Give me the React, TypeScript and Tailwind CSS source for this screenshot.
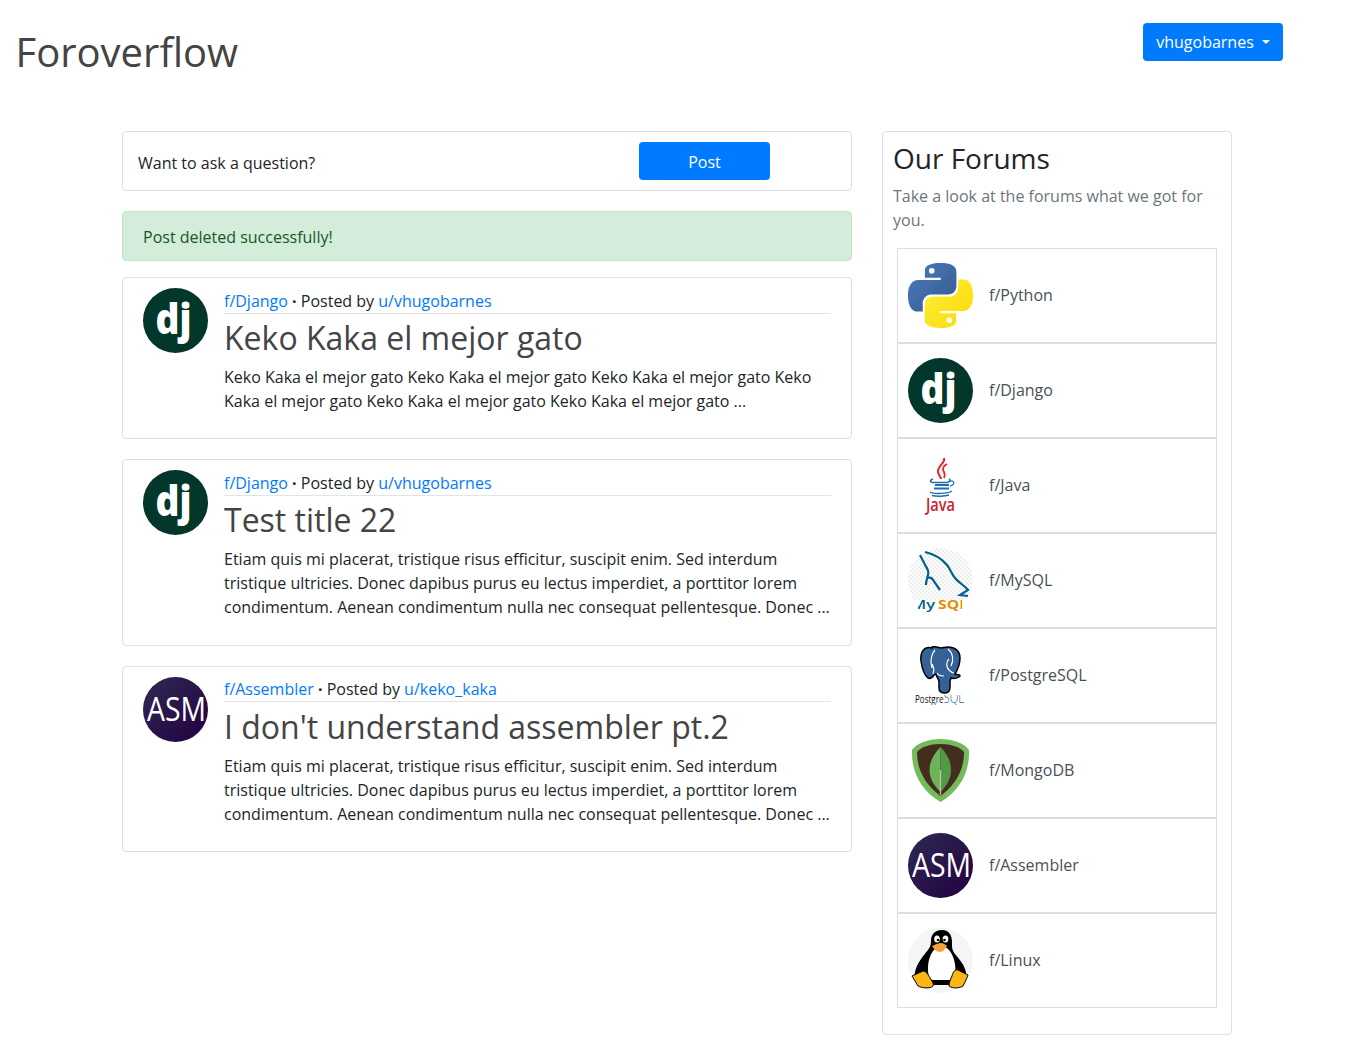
const PY_HALF =
  "M54.9 0C26.8 0 28.6 12.2 28.6 12.2l0 12.6h26.8v3.8H17.9S0 26.6 0 54.9c0 28.3 15.7 27.3 15.7 27.3h9.3V69s-.5-15.7 15.4-15.7h26.6s14.9.2 14.9-14.4V14.7S84.2 0 54.9 0zM40.2 8.5a4.8 4.8 0 1 1 0 9.6 4.8 4.8 0 0 1 0-9.6z";

function PythonLogo() {
  return (
    <svg viewBox="0 0 110 110" className="w-[65px] h-[65px] shrink-0">
      <defs>
        <linearGradient id="pyBlue" x1="0" y1="0" x2="1" y2="1">
          <stop offset="0" stopColor="#4a7cbd" />
          <stop offset="1" stopColor="#36598f" />
        </linearGradient>
        <linearGradient id="pyYellow" x1="0" y1="0" x2="1" y2="1">
          <stop offset="0" stopColor="#fdd900" />
          <stop offset="1" stopColor="#faf040" />
        </linearGradient>
      </defs>
      <path d={PY_HALF} fill="url(#pyBlue)" />
      <path d={PY_HALF} fill="url(#pyYellow)" transform="rotate(180 55 55)" />
    </svg>
  );
}

function DjangoLogo() {
  return (
    <svg viewBox="0 0 65 65" className="w-[65px] h-[65px] shrink-0 overflow-visible">
      <circle cx="32.5" cy="32.5" r="32.5" fill="#04372b" />
      <text x="12.500" y="46" fontFamily="'Open Sans', sans-serif" fontWeight="800" fontSize="42" textLength="36" lengthAdjust="spacingAndGlyphs" fill="#fff">
        dj
      </text>
    </svg>
  );
}

function JavaLogo() {
  return (
    <svg viewBox="0 0 65 65" className="w-[65px] h-[65px] shrink-0">
      <g transform="translate(1 3)">
        <path d="M35 2c2 5-7 8-6 14 .4 3 3 5 3 7" fill="none" stroke="#dc2a2a" strokeWidth="2" />
        <path d="M38 8c-4 2-5 5-3 8 1 2 1 4 0 6" fill="none" stroke="#dc2a2a" strokeWidth="1.800" />
        <path d="M24 23c-3 1-4 3 0 3.500h14c3-.5 4-2.500 2-3.500" fill="none" stroke="#1f6fb0" strokeWidth="1.500" />
        <path d="M26 29h14M25 32.500h15" stroke="#1f6fb0" strokeWidth="1.800" />
        <path d="M21 36c3 2 18 2 22-1M23 39.500c4 1 13 1 17-.5" fill="none" stroke="#1f6fb0" strokeWidth="1.500" />
        <path d="M41 25c5-1 5 4 0 5" fill="none" stroke="#1f6fb0" strokeWidth="1.300" />
      </g>
      <text x="18" y="58" fontFamily="'Open Sans', sans-serif" fontWeight="600" fontSize="18" textLength="29" lengthAdjust="spacingAndGlyphs" fill="#c9202c">
        Java
      </text>
    </svg>
  );
}

function MysqlLogo() {
  return (
    <svg viewBox="0 0 65 65" className="w-[65px] h-[65px] shrink-0 overflow-visible">
      <defs>
        <pattern id="checks" width="4" height="4" patternUnits="userSpaceOnUse">
          <rect width="4" height="4" fill="#fff" />
          <rect width="2" height="2" fill="#eeeeee" />
          <rect x="2" y="2" width="2" height="2" fill="#eeeeee" />
        </pattern>
        <clipPath id="mysqlClip">
          <rect x="10" y="50" width="44" height="15" />
        </clipPath>
      </defs>
      <circle cx="32.500" cy="32.500" r="32.500" fill="url(#checks)" />
      <rect x="0" y="52" width="65" height="13" fill="#fff" />
      <path
        d="M17 4c9 2 16 6 22 13 4 5 5 10 8 13 4 5 9 7 13 12l-8 5 8 1M12 7c2 4 4 7 5 10 3 4 4 7 3 10-1 4-2 6-2 10M20 30c2-1 4 0 5 2l7 10"
        fill="none"
        stroke="#00618a"
        strokeWidth="2.200"
      />
      <g clipPath="url(#mysqlClip)">
        <text x="3" y="61" fontFamily="'Open Sans', sans-serif" fontWeight="600" fontSize="13" textLength="24" lengthAdjust="spacingAndGlyphs" fill="#00618a">
          My
        </text>
        <text x="30" y="61" fontFamily="'Open Sans', sans-serif" fontWeight="700" fontSize="13" textLength="30" lengthAdjust="spacingAndGlyphs" fill="#e48e00">
          SQL
        </text>
      </g>
    </svg>
  );
}

function PostgresLogo() {
  return (
    <svg viewBox="0 0 65 65" className="w-[65px] h-[65px] shrink-0">
      <defs>
        <clipPath id="pgClip">
          <rect x="7" y="52" width="49" height="10" />
        </clipPath>
      </defs>
      <path
        d="M24 5C16 3 12 9 13 18c1 7 3 14 7 17 2 1 4 0 6-3l2-1 1 3c1 2 2 3 2 5v6c0 3 2 5 6 5 3 0 5-2 5-6v-6l1-3c3 1 8 0 9-2 0-2-4-1-5-2 3-5 5-10 5-16 0-7-5-11-12-11-3 0-5 1-7 1-4-1-6-2-9-1z"
        fill="#346297"
        stroke="#000"
        strokeWidth="1.500"
      />
      <path d="M27 7c-4 4-5 12-3 18M24 21c2 3 2 7 1 10M40 6c5 4 6 11 3 17M41 16c-3 3-3 8 0 11 2 2 3 3 5 3M29 30c1 2 3 3 7 3" fill="none" stroke="#fff" strokeWidth="1.200" />
      <g clipPath="url(#pgClip)">
        <text x="7" y="60" fontFamily="'Open Sans', sans-serif" fontSize="10" textLength="49" lengthAdjust="spacingAndGlyphs" fill="#111">
          Postgre
          <tspan fontSize="14" fontWeight="300" fill="#346297">
            SQL
          </tspan>
        </text>
      </g>
    </svg>
  );
}

function MongoLogo() {
  return (
    <svg viewBox="0 0 65 65" className="w-[65px] h-[65px] shrink-0">
      <path d="M32.500 1C20 1 9 5 4 12c-1 23 10 41 28.500 52C51 53 62 35 61 12 56 5 45 1 32.500 1z" fill="#74bb5c" />
      <path d="M32.500 6C22 6 13 9 9 14c0 19 9 33 23.500 44C47 47 56 33 56 14 52 9 43 6 32.500 6z" fill="#442d1e" />
      <path d="M32.500 9c-7 7-11 15-11 23 0 9 5 16 11 22z" fill="#6db35a" />
      <path d="M32.500 9c7 7 10.500 15 10.500 23 0 9-4.500 16-10.500 22z" fill="#4e9a47" />
      <path d="M32.500 32v25" stroke="#cbb9a6" strokeWidth="1.300" />
    </svg>
  );
}

function AsmLogo() {
  return (
    <svg viewBox="0 0 65 65" className="w-[65px] h-[65px] shrink-0 overflow-visible">
      <defs>
        <linearGradient id="asmBg" x1="0" y1="0" x2="1" y2="1">
          <stop offset="0" stopColor="#2f2a55" />
          <stop offset="1" stopColor="#22003f" />
        </linearGradient>
      </defs>
      <circle cx="32.500" cy="32.500" r="32.500" fill="url(#asmBg)" />
      <text x="4" y="44" fontFamily="'Open Sans', sans-serif" fontWeight="500" fontSize="32" textLength="59" lengthAdjust="spacingAndGlyphs" fill="#fff">
        ASM
      </text>
    </svg>
  );
}

function LinuxLogo() {
  return (
    <svg viewBox="0 0 65 65" className="w-[65px] h-[65px] shrink-0">
      <circle cx="32.500" cy="32.500" r="32.500" fill="#f5f5f5" />
      <path d="M34 2c-7 0-11 4-11 11 0 4-1 6-3 9-5 6-11 13-13 22-1 3 0 5 1 6l50-1c1-2 0-5-1-8-2-6-6-10-10-15-3-4-3-6-3-12 0-7-3-12-10-12z" fill="#000" />
      <path d="M22 48h22l2 9H20z" fill="#000" />
      <path d="M33 17c-5 2-9 6-11 12-3 7-2 15-1 22l4 1h18l3-1c2-7 2-15-1-22-2-6-6-10-12-12z" fill="#fff" />
      <ellipse cx="29" cy="11" rx="2.800" ry="3.500" fill="#fff" />
      <ellipse cx="37.500" cy="11" rx="2.800" ry="3.500" fill="#fff" />
      <circle cx="30" cy="12" r="1.300" fill="#000" />
      <circle cx="36.500" cy="12" r="1.300" fill="#000" />
      <path d="M24 18c4-2 7-3 9-3s4 1 6 3c-2 3-4 6-7 6-3 0-6-3-8-6z" fill="#f7a13a" />
      <path d="M4 48l11-5c3 0 5 3 7 7 2 3 4 6 3 8-3 3-11 2-15 0-2-3-4-7-6-10z" fill="#fdb515" stroke="#000" strokeWidth="1" />
      <path d="M60 47l-10-5c-3-1-5 2-6 6-2 4-3 7-3 10 4 3 11 2 14 0 2-4 4-8 5-11z" fill="#fdb515" stroke="#000" strokeWidth="1" />
    </svg>
  );
}

const posts = [
  {
    forum: "f/Django",
    user: "u/vhugobarnes",
    title: "Keko Kaka el mejor gato",
    body: "Keko Kaka el mejor gato Keko Kaka el mejor gato Keko Kaka el mejor gato Keko Kaka el mejor gato Keko Kaka el mejor gato Keko Kaka el mejor gato ...",
    logo: <DjangoLogo />,
  },
  {
    forum: "f/Django",
    user: "u/vhugobarnes",
    title: "Test title 22",
    body: "Etiam quis mi placerat, tristique risus efficitur, suscipit enim. Sed interdum tristique ultricies. Donec dapibus purus eu lectus imperdiet, a porttitor lorem condimentum. Aenean condimentum nulla nec consequat pellentesque. Donec ...",
    logo: <DjangoLogo />,
  },
  {
    forum: "f/Assembler",
    user: "u/keko_kaka",
    title: "I don't understand assembler pt.2",
    body: "Etiam quis mi placerat, tristique risus efficitur, suscipit enim. Sed interdum tristique ultricies. Donec dapibus purus eu lectus imperdiet, a porttitor lorem condimentum. Aenean condimentum nulla nec consequat pellentesque. Donec ...",
    logo: <AsmLogo />,
  },
];

const forums = [
  { name: "f/Python", logo: <PythonLogo /> },
  { name: "f/Django", logo: <DjangoLogo /> },
  { name: "f/Java", logo: <JavaLogo /> },
  { name: "f/MySQL", logo: <MysqlLogo /> },
  { name: "f/PostgreSQL", logo: <PostgresLogo /> },
  { name: "f/MongoDB", logo: <MongoLogo /> },
  { name: "f/Assembler", logo: <AsmLogo /> },
  { name: "f/Linux", logo: <LinuxLogo /> },
];

export default function App() {
  return (
    <div className="min-h-[1055px] bg-white font-['Open_Sans',sans-serif] text-base leading-6 text-[#212529]">
      <header className="flex items-start justify-between pl-[15.500px] pr-[71px] pt-[23px]">
        <h1 className="mt-[5px] text-[40px] leading-[48px] text-[#444444]">Foroverflow</h1>
        <button className="flex h-[38px] w-[140px] items-center justify-center rounded bg-[#007bff] text-white">
          vhugobarnes
          <span className="ml-2 h-0 w-0 border-x-[4.800px] border-t-[4.800px] border-x-transparent border-t-white" />
        </button>
      </header>

      <main className="ml-[122px] mt-[55px] flex items-start gap-[30px]">
        <div className="w-[730px]">
          <div className="flex h-[60px] items-center rounded-sm border border-[#dfdfdf] pl-[15px]">
            <span className="mt-1 w-[501px]">Want to ask a question?</span>
            <button className="h-[38px] w-[131px] rounded-sm bg-[#007bff] pt-0.5 text-white">Post</button>
          </div>

          <div className="mt-5 h-[50px] rounded border border-[#c3e6cb] bg-[#d4edda] px-5 pt-[13px] text-[#155724]">
            Post deleted successfully!
          </div>

          <div className="mt-4 flex flex-col gap-5">
            {posts.map((post) => (
              <article key={post.title} className="flex gap-4 rounded-sm border border-[#dfdfdf] px-5 pb-[9.400px] pt-2.5">
                {post.logo}
                <div className="min-w-0 flex-1">
                  <div className="border-b border-[#e4e4e4] pt-[0.600px]">
                    <a className="text-[#007bff]">{post.forum}</a> <b>·</b> Posted by{" "}
                    <a className="text-[#007bff]">{post.user}</a>
                  </div>
                  <h2 className="mt-[5.400px] mb-[7.600px] text-[32px] leading-[38.400px] text-[#444444]">{post.title}</h2>
                  <p className="mb-4">{post.body}</p>
                </div>
              </article>
            ))}
          </div>
        </div>

        <aside className="w-[350px] rounded-sm border border-[#dfdfdf] p-2.5">
          <h3 className="mb-2 text-[28px] leading-[33.600px] text-[#212529]">Our Forums</h3>
          <p className="mb-4 text-[#6c757d]">Take a look at the forums what we got for you.</p>
          <ul className="mb-4 ml-1 mr-1">
            {forums.map((forum) => (
              <li key={forum.name} className="flex h-[95px] items-center gap-4 border border-[#dddddd] px-2.5 text-[#495057]">
                {forum.logo}
                <span>{forum.name}</span>
              </li>
            ))}
          </ul>
        </aside>
      </main>
    </div>
  );
}
